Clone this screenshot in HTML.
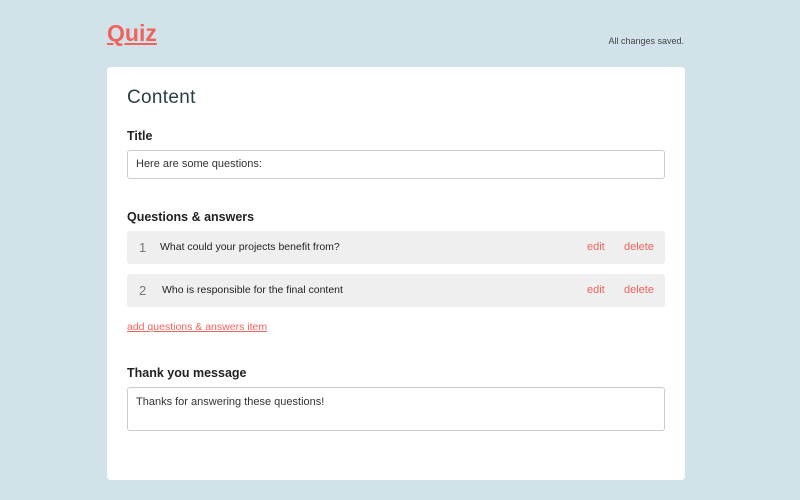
<!DOCTYPE html>
<html><head><style>
*{box-sizing:border-box;margin:0;padding:0}
body{width:800px;height:500px;background:#d1e3e9;font-family:"Liberation Sans",sans-serif;position:relative;overflow:hidden}
.abs{position:absolute}
.logo{left:107px;top:20px;font-size:23px;font-weight:bold;color:#f0635c;text-decoration:underline;}
.saved{right:116px;top:36px;font-size:9px;color:#444}
.card{left:107px;top:67px;width:578px;height:413px;background:#fff;border-radius:4px}
h1{position:absolute;left:20px;top:20px;font-size:19px;font-weight:normal;color:#2b3d45;letter-spacing:.3px}
.lbl{position:absolute;left:20px;font-size:12.5px;font-weight:bold;color:#222}
.input{position:absolute;left:20px;width:538px;border:1px solid #ccc;border-radius:3px;font-size:11px;color:#333;padding-left:8px}
.row{position:absolute;left:20px;width:538px;height:33px;background:#efefef;border-radius:3px;font-size:10.5px;color:#222}
.row .n{position:absolute;left:12px;top:9px;font-size:13px;color:#777}
.row .t{position:absolute;top:10px}
.row .e{position:absolute;left:460px;top:10px;color:#f0635c;font-size:11px}
.row .d{position:absolute;left:497px;top:10px;color:#f0635c;font-size:11px}
.add{position:absolute;left:20px;top:254px;font-size:10.5px;color:#f0635c;text-decoration:underline}
</style></head><body>
<div class="abs logo">Quiz</div>
<div class="abs saved">All changes saved.</div>
<div class="abs card">
<h1>Content</h1>
<div class="lbl" style="top:62px">Title</div>
<div class="input" style="top:83px;height:29px;line-height:27px">Here are some questions:</div>
<div class="lbl" style="top:143px">Questions &amp; answers</div>
<div class="row" style="top:164px"><span class="n">1</span><span class="t" style="left:33px">What could your projects benefit from?</span><span class="e">edit</span><span class="d">delete</span></div>
<div class="row" style="top:207px"><span class="n">2</span><span class="t" style="left:35px">Who is responsible for the final content</span><span class="e">edit</span><span class="d">delete</span></div>
<div class="add">add questions &amp; answers item</div>
<div class="lbl" style="top:299px">Thank you message</div>
<div class="input" style="top:320px;height:44px;padding-top:8px">Thanks for answering these questions!</div>
</div>
</body></html>
